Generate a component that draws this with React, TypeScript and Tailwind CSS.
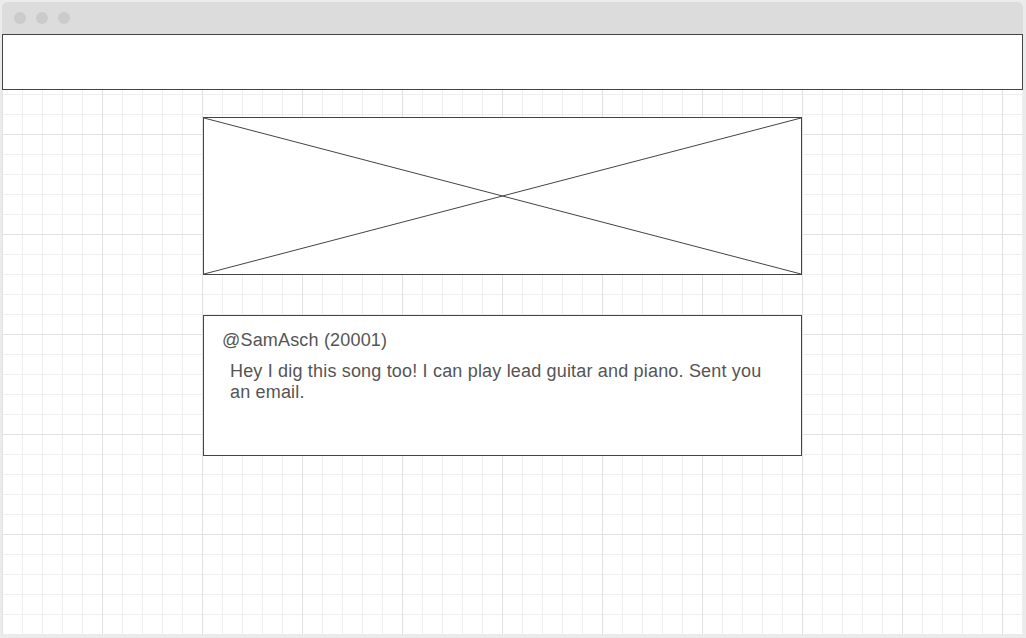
import React from "react";

export default function App() {
  return (
    <div className="w-[1026px] h-[638px] bg-[#ebebeb] pt-[2px] pl-[2px] overflow-hidden" style={{ fontFamily: '"Liberation Sans", Arial, sans-serif' }}>
      <div className="w-[1021px] h-[632px] flex flex-col rounded-t-[5px] overflow-hidden bg-white">
        <div className="h-[32px] bg-[#dcdcdc] flex items-center gap-[10px] pl-[12px] shrink-0">
          <div className="w-[12px] h-[12px] rounded-full bg-[#cbcbcb]" />
          <div className="w-[12px] h-[12px] rounded-full bg-[#cbcbcb]" />
          <div className="w-[12px] h-[12px] rounded-full bg-[#cbcbcb]" />
        </div>
        <div className="flex-1 flex flex-col bg-white bg-[linear-gradient(to_right,#e2e2e2_1px,transparent_1px),linear-gradient(to_bottom,#e2e2e2_1px,transparent_1px),linear-gradient(to_right,#efefef_1px,transparent_1px),linear-gradient(to_bottom,#efefef_1px,transparent_1px)] bg-[size:100px_100px,100px_100px,20px_20px,20px_20px]">
          <div className="h-[56px] w-[1021px] border border-[#444444] bg-white shrink-0" />
          <div className="ml-[201px] mt-[27px] w-[599px] h-[158px] border border-[#444444] bg-white relative shrink-0">
            <svg className="absolute inset-0 w-full h-full" viewBox="0 0 597 156" preserveAspectRatio="none">
              <line x1="0" y1="0" x2="597" y2="156" stroke="#444444" strokeWidth="1" />
              <line x1="0" y1="156" x2="597" y2="0" stroke="#444444" strokeWidth="1" />
            </svg>
          </div>
          <div className="ml-[201px] mt-[40px] w-[599px] h-[141px] border border-[#444444] bg-white pl-[18px] pt-[14px] text-[#555555] text-[18px] shrink-0">
            <div className="leading-[20px] tracking-[0.18px]">@SamAsch (20001)</div>
            <div className="ml-[8px] mt-[11px] w-[545px] leading-[21px] tracking-[0.18px]">
              Hey I dig this song too! I can play lead guitar and piano. Sent you an email.
            </div>
          </div>
        </div>
      </div>
    </div>
  );
}
